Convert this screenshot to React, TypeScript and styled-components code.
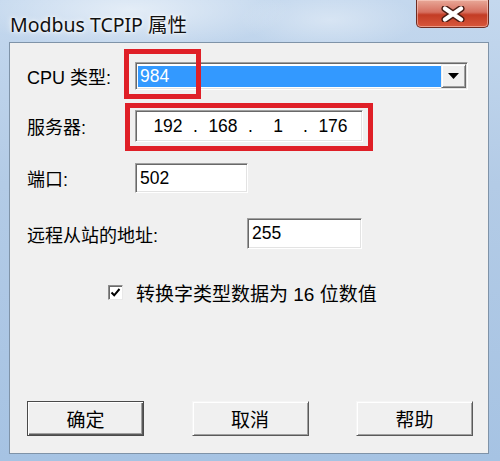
import styled, { createGlobalStyle } from 'styled-components';

const LATIN = '"Liberation Sans", "Noto Sans CJK SC", sans-serif';
const TITLE = '"Noto Sans", "Noto Sans CJK SC", sans-serif';

const GlobalStyle = createGlobalStyle`
  html, body {
    margin: 0;
    padding: 0;
    width: 500px;
    height: 461px;
    overflow: hidden;
    background: #b8cfe8;
  }
`;

const Window = styled.div`
  width: 500px;
  height: 461px;
  box-sizing: border-box;
  padding: 0 11px 7px 9px;
  display: flex;
  flex-direction: column;
  background:
    radial-gradient(ellipse 160px 40px at 130px 10px, rgba(255, 255, 255, 0.55), transparent),
    radial-gradient(ellipse 90px 30px at 330px 20px, rgba(255, 255, 255, 0.35), transparent),
    linear-gradient(180deg, #c4d8ee 0%, #b3cbe6 40%, #a6c3e3 100%);
`;

const TitleBar = styled.div`
  height: 42px;
  flex: none;
  display: flex;
  justify-content: space-between;
  align-items: flex-start;
`;

const Title = styled.div`
  margin: 9px 0 0 1px;
  font-family: ${TITLE};
  font-size: 19.5px;
  color: #111;
  text-shadow: 0 0 6px #fff, 0 0 3px #fff;
`;

const CloseButton = styled.div`
  width: 73px;
  height: 28px;
  box-sizing: border-box;
  border: 1px solid #6e2c22;
  border-top: none;
  border-radius: 0 0 5px 5px;
  background: linear-gradient(180deg, #e8a898 0%, #d66f5f 45%, #c33c25 55%, #d8573b 100%);
  box-shadow: inset 0 0 0 1px rgba(255, 220, 210, 0.5);
  display: flex;
  align-items: center;
  justify-content: center;
`;

const Client = styled.div`
  flex: 1;
  position: relative;
  background: #f0f0f0;
  border: 1px solid #7f93a8;
  box-sizing: border-box;
  padding: 0 15px 0 17px;
  display: flex;
  flex-direction: column;
  font-family: ${LATIN};
  color: #000;
`;

const Row = styled.div<{ $mt: number; $h: number }>`
  margin-top: ${p => p.$mt}px;
  height: ${p => p.$h}px;
  display: flex;
  align-items: center;
`;

const Label = styled.div<{ $w: number }>`
  width: ${p => p.$w}px;
  flex: none;
  font-size: 18px;
  white-space: nowrap;
`;

const Sunken = styled.div<{ $w: number }>`
  position: relative;
  width: ${p => p.$w}px;
  height: 100%;
  box-sizing: border-box;
  background: #fff;
  border: 1px solid;
  border-color: #a0a0a0 #ffffff #ffffff #a0a0a0;
  box-shadow: inset 1px 1px 0 #696969, inset -1px -1px 0 #e3e3e3;
  display: flex;
  align-items: center;
  font-size: 17.5px;
`;

const FieldText = styled.span`
  padding-left: 4px;
`;

const Selected = styled.div`
  flex: 1;
  align-self: stretch;
  margin: 3px 0 2px 2px;
  background: #3399ff;
  color: #fff;
  display: flex;
  align-items: center;
  padding-left: 2px;
`;

const DropButton = styled.div`
  width: 25px;
  align-self: stretch;
  margin: 1px 1px 1px 0;
  box-sizing: border-box;
  background: #f0f0f0;
  border: 1px solid;
  border-color: #f0f0f0 #696969 #696969 #f0f0f0;
  box-shadow: inset 1px 1px 0 #fff, inset -1px -1px 0 #a0a0a0;
  display: flex;
  align-items: center;
  justify-content: center;
`;

const IpGrid = styled.div`
  display: grid;
  grid-template-columns: 44px 11px 44px 11px 44px 11px 44px;
  padding-left: 10px;
  text-align: center;
`;

const Annotation = styled.div<{ $l: number; $t: number; $w: number; $h: number }>`
  position: absolute;
  left: ${p => p.$l}px;
  top: ${p => p.$t}px;
  width: ${p => p.$w}px;
  height: ${p => p.$h}px;
  box-sizing: border-box;
  border: 5px solid #df1f27;
  pointer-events: none;
`;

const CheckRow = styled(Row)`
  padding-left: 81px;
  gap: 13px;
`;

const CheckBox = styled.div`
  width: 15px;
  height: 15px;
  box-sizing: border-box;
  background: #fff;
  border: 1px solid;
  border-color: #8e8e8e #e8e8e8 #e8e8e8 #8e8e8e;
  box-shadow: inset 1px 1px 0 #6a6a6a;
  display: flex;
  align-items: center;
  justify-content: center;
`;

const CheckLabel = styled.div`
  font-size: 19px;
  white-space: nowrap;
`;

const ButtonRow = styled(Row)`
  justify-content: space-between;
`;

const Button = styled.div<{ $default?: boolean }>`
  width: 117px;
  height: 35px;
  box-sizing: border-box;
  background: #f0f0f0;
  border: 1px solid;
  border-color: ${p => (p.$default ? '#4a4a4a' : '#f5f5f5 #5a5a5a #5a5a5a #f5f5f5')};
  box-shadow: ${p =>
    p.$default
      ? 'inset 1px 1px 0 #fff, inset -1px -1px 0 #5a5a5a, inset -2px -2px 0 #a0a0a0'
      : 'inset 1px 1px 0 #fff, inset -1px -1px 0 #a0a0a0'};
  display: flex;
  align-items: center;
  justify-content: center;
  font-size: 19px;
`;

export default function App() {
  return (
    <>
      <GlobalStyle />
      <Window>
        <TitleBar>
          <Title>Modbus TCPIP 属性</Title>
          <CloseButton>
            <svg width="26" height="16" viewBox="0 0 26 16">
              <path d="M5 2.5 L21 13.5 M21 2.5 L5 13.5" stroke="#4a1c14" strokeWidth="7" strokeLinecap="round" />
              <path d="M5 2.5 L21 13.5 M21 2.5 L5 13.5" stroke="#fff" strokeWidth="4.2" strokeLinecap="round" />
            </svg>
          </CloseButton>
        </TitleBar>
        <Client>
          <Row $mt={19} $h={28}>
            <Label $w={108}>CPU 类型:</Label>
            <Sunken $w={333}>
              <Selected>984</Selected>
              <DropButton>
                <svg width="11" height="6" viewBox="0 0 11 6">
                  <path d="M0 0 H11 L5.5 6 Z" fill="#000" />
                </svg>
              </DropButton>
              <Annotation $l={-12} $t={-14} $w={77} $h={50} />
            </Sunken>
          </Row>
          <Row $mt={20} $h={32}>
            <Label $w={108}>服务器:</Label>
            <Sunken $w={228}>
              <IpGrid>
                <span>192</span>
                <span>.</span>
                <span>168</span>
                <span>.</span>
                <span>1</span>
                <span>.</span>
                <span>176</span>
              </IpGrid>
              <Annotation $l={-11} $t={-8} $w={248} $h={48} />
            </Sunken>
          </Row>
          <Row $mt={21} $h={30}>
            <Label $w={108}>端口:</Label>
            <Sunken $w={113}>
              <FieldText>502</FieldText>
            </Sunken>
          </Row>
          <Row $mt={25} $h={31}>
            <Label $w={220}>远程从站的地址:</Label>
            <Sunken $w={115}>
              <FieldText>255</FieldText>
            </Sunken>
          </Row>
          <CheckRow $mt={36} $h={15}>
            <CheckBox>
              <svg width="11" height="11" viewBox="0 0 11 11">
                <path d="M1.5 5.5 L4.2 8.3 L9.5 2" stroke="#000" strokeWidth="2" fill="none" />
              </svg>
            </CheckBox>
            <CheckLabel>转换字类型数据为 16 位数值</CheckLabel>
          </CheckRow>
          <ButtonRow $mt={101} $h={35}>
            <Button $default>确定</Button>
            <Button>取消</Button>
            <Button>帮助</Button>
          </ButtonRow>
        </Client>
      </Window>
    </>
  );
}
